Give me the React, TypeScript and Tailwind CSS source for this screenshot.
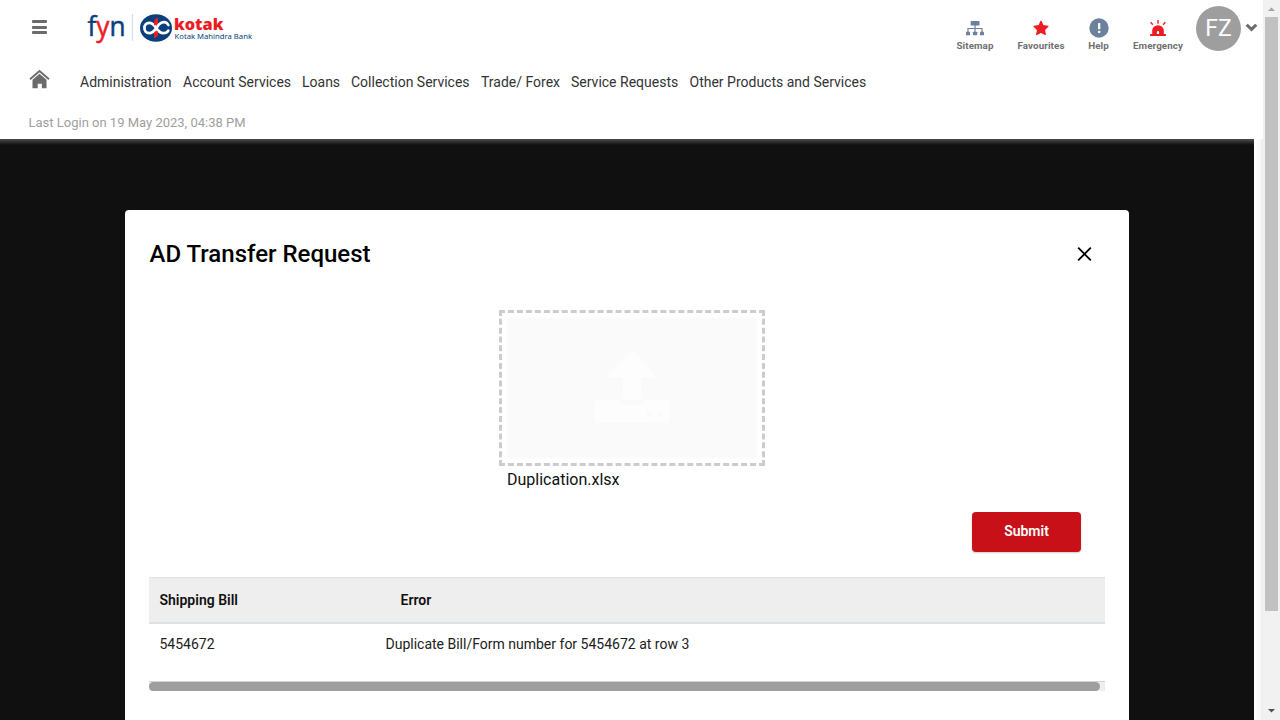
import React from "react";

const navItems = [
  { label: "Administration", width: "w-[103px]" },
  { label: "Account Services", width: "w-[119px]" },
  { label: "Loans", width: "w-[49px]" },
  { label: "Collection Services", width: "w-[130px]" },
  { label: "Trade/ Forex", width: "w-[90px]" },
  { label: "Service Requests", width: "w-[118.500px]" },
  { label: "Other Products and Services", width: "w-[200px]" },
];

function Logo() {
  return (
    <svg width="172" height="40" viewBox="84 8 172 40" className="block">
      <text x="87.5" y="35.6" fontFamily="Open Sans" fontSize="27.5" fontWeight="400" fill="#083f7c" stroke="#083f7c" strokeWidth=".5" textLength="38" lengthAdjust="spacingAndGlyphs">
        f<tspan fill="#ed1c24" stroke="#ed1c24">y</tspan>n
      </text>
      <path d="M132.500 14v27" stroke="#d5deeb" strokeWidth="1.200" />
      <ellipse cx="156" cy="28" rx="16" ry="13.800" fill="#083f7c" />
      <path d="M154.200 37.800V22.500c0-3 1.500-4.500 3.800-4.500v15.300c0 3-1.500 4.500-3.800 4.500Z" fill="#ed1c24" />
      <path d="M168.300 25c-1.800-3.600-6.300-3.800-9-.8-3 3.200-5 9-10 9-6.500 0-6.500-10.400 0-10.400 3.500 0 5 2.500 6.700 5 2 2.900 3.700 5.400 7.200 5.400 2.400 0 4.200-1 5.100-2.600" fill="none" stroke="#fff" strokeWidth="2.700" strokeLinecap="round" />
      <path d="M154.200 25.500V22.500c0-3 1.500-4.500 3.800-4.500v5.500M154.200 32.500v5.300c2.300 0 3.800-1.500 3.800-4.500v-2" fill="#ed1c24" />
      <text x="174" y="30" fontFamily="Open Sans" fontSize="16.500" fontWeight="800" fill="#ed1c24" textLength="49.500" lengthAdjust="spacingAndGlyphs">kotak</text>
      <text x="174.500" y="38.600" fontFamily="Noto Sans" fontSize="7.900" fill="#083f7c" textLength="77.500" lengthAdjust="spacingAndGlyphs">Kotak Mahindra Bank</text>
    </svg>
  );
}

function SitemapIcon() {
  return (
    <svg width="18" height="20" viewBox="0 0 18 20" fill="#6c819c">
      <rect x="4.700" y="3" width="8.800" height="4.500" rx=".5" />
      <rect x="0" y="13.800" width="4" height="3.400" rx=".4" />
      <rect x="6.900" y="13.800" width="4.300" height="3.400" rx=".4" />
      <rect x="14" y="13.800" width="4" height="3.400" rx=".4" />
      <path d="M9 7v7M2 14v-3.500h14V14" fill="none" stroke="#6c819c" strokeWidth="1.200" />
    </svg>
  );
}

function StarIcon() {
  return (
    <svg width="18" height="20" viewBox="0 0 18 20">
      <path d="m9 3.200 2.100 4.500 4.900.6-3.600 3.400.9 4.900L9 14.200l-4.300 2.400.9-4.900L2 8.300l4.900-.6Z" fill="#ed1c24" stroke="#ed1c24" strokeWidth="1.200" strokeLinejoin="round" />
    </svg>
  );
}

function HelpIcon() {
  return (
    <svg width="20" height="20" viewBox="0 0 20 20">
      <circle cx="10" cy="10" r="9.700" fill="#6c819c" />
      <rect x="9" y="5" width="2.300" height="6.300" rx=".6" fill="#fff" />
      <rect x="9" y="12.700" width="2.300" height="2.300" rx=".6" fill="#fff" />
    </svg>
  );
}

function SirenIcon() {
  return (
    <svg width="18" height="20" viewBox="0 0 18 20" fill="#ed1c24">
      <path d="M3.200 16.300V12.500a5.800 5.300 0 0 1 11.600 0v3.800h-4.700v-2.200a1.100 1.100 0 0 0-2.200 0v2.200Z" />
      <rect x="1" y="16" width="16" height="1.900" rx=".6" />
      <path d="M9 2v3.800M1.700 4.200l2.100 2.500M16.300 4.200l-2.100 2.500" stroke="#ed1c24" strokeWidth="1.400" />
    </svg>
  );
}

function Shortcut({ label, width, children }: { label: string; width: string; children: React.ReactNode }) {
  return (
    <div className={`flex shrink-0 flex-col items-center ${width}`}>
      {children}
      <span className="mt-[1px] whitespace-nowrap text-[9.800px] font-bold leading-[14px] tracking-[0.100px] text-[#707070]">{label}</span>
    </div>
  );
}

function Header() {
  return (
    <header className="h-[139px] w-full shrink-0 bg-white">
      <div className="flex h-[60px] items-start">
        <button className="ml-8 mt-5 flex w-[15px] flex-col gap-[2.500px]">
          <span className="h-[3px] w-full rounded-[1px] bg-[#6b6b6b]" />
          <span className="h-[3px] w-full rounded-[1px] bg-[#6b6b6b]" />
          <span className="h-[3px] w-full rounded-[1px] bg-[#6b6b6b]" />
        </button>
        <div className="ml-[37px] mt-2"><Logo /></div>
        <div className="ml-[700px] mt-[18px] flex gap-6">
          <Shortcut label="Sitemap" width="w-[38px]"><SitemapIcon /></Shortcut>
          <Shortcut label="Favourites" width="w-[46px]"><StarIcon /></Shortcut>
          <Shortcut label="Help" width="w-[21px]"><HelpIcon /></Shortcut>
          <Shortcut label="Emergency" width="w-[50px]"><SirenIcon /></Shortcut>
        </div>
        <div className="ml-[13px] mt-1.5 flex h-[45px] w-[45px] items-center justify-center rounded-full bg-[#9e9e9e] text-[23px] text-white">
          <span className="mt-px">FZ</span>
        </div>
        <svg className="ml-1 mt-[22px]" width="13" height="11" viewBox="0 0 13 11">
          <path d="m1.700 2.700 4.800 4.700 4.800-4.700" fill="none" stroke="#6b6b6b" strokeWidth="3" />
        </svg>
      </div>
      <div className="flex h-[44px] items-center">
        <svg className="-mt-[7px] ml-[29px]" width="21" height="20" viewBox="0 0 21 20" fill="#6b6b6b">
          <path d="M1 10.200 10.500 2l9.500 8.200" fill="none" stroke="#6b6b6b" strokeWidth="1.900" />
          <path d="m10.500 4.700 7 6v8.500h-4.600v-4.500H8.700v4.500H3.500v-8.500Z" />
        </svg>
        <nav className="ml-[30px] flex text-[14px] text-[#333]">
          {navItems.map((n) => (
            <a key={n.label} className={`whitespace-nowrap ${n.width}`}>{n.label}</a>
          ))}
        </nav>
      </div>
      <p className="ml-[28.500px] mt-[9px] text-[13px] leading-5 text-[#a0a0a0]">Last Login on 19 May 2023, 04:38 PM</p>
    </header>
  );
}

function UploadArea() {
  return (
    <div className="ml-[374px] mt-10 h-[156px] w-[266px] border-[3px] border-dashed border-[#ccc] p-[5px]">
      <div className="h-[140px] w-[250px] bg-[#fafafa]">
        <svg width="250" height="140" viewBox="507 318 250 140" fill="#fdfdfd">
          <path d="M631 351.500q1.300-1 2.600 0L654.500 373q1.500 3-1.500 4H641v20.500q0 2-2 2h-14q-2 0-2-2V377h-12.500q-3-1-1.500-4Z" />
          <path d="M598 400h19q2 0 3 2t4 3h17q3 0 4-3t3-2h18.500q3 0 3 3v17q0 3-3 3H598q-3 0-3-3v-17q0-3 3-3Z" />
          <circle cx="649" cy="414" r="2.700" fill="#fafafa" />
          <circle cx="660.500" cy="414" r="2.700" fill="#fafafa" />
        </svg>
      </div>
    </div>
  );
}

function Modal() {
  return (
    <section className="ml-[125px] mt-[71px] h-[510px] w-[1004px] rounded-t bg-white text-[#111]">
      <div className="flex items-center pt-7">
        <h1 className="ml-[24.500px] flex-1 text-[24px] font-medium leading-8 text-black">AD Transfer Request</h1>
        <svg className="mr-[36px]" width="17" height="17" viewBox="0 0 17 17">
          <path d="m2.200 1.700 12.600 12.600M14.800 1.700 2.200 14.300" stroke="#000" strokeWidth="1.800" />
        </svg>
      </div>
      <UploadArea />
      <p className="ml-[382px] mt-0.5 text-[16px] leading-6 text-[#111]">Duplication.xlsx</p>
      <div className="mt-5 flex justify-end pr-12">
        <button className="h-10 w-[109px] rounded bg-[#c71017] pb-0.5 text-[14px] font-semibold text-white shadow-[0_1px_2px_rgba(0,0,0,0.2)]">Submit</button>
      </div>
      <div className="ml-6 mt-[25px] w-[956px]">
        <div className="flex h-[47px] items-center border-b-2 border-t border-[#dee2e6] bg-[#eee] text-[14px] font-semibold text-[#111]">
          <span className="w-[251.500px] pl-[10.500px]">Shipping Bill</span>
          <span>Error</span>
        </div>
        <div className="flex h-[57px] items-start pt-2.5 text-[14px] leading-5 text-[#212121]">
          <span className="w-[236.500px] pl-[10.500px]">5454672</span>
          <span>Duplicate Bill/Form number for 5454672 at row 3</span>
        </div>
        <div className="h-[10px] w-full border-t border-[#d2d2d2] bg-[#eee]">
          <div className="h-[9px] w-[951px] rounded-full bg-[#9e9e9e]" />
        </div>
      </div>
    </section>
  );
}

function PageScrollbar() {
  return (
    <div className="flex h-full w-[17px] shrink-0 flex-col items-center bg-[#f1f1f1]">
      <svg className="shrink-0" width="17" height="17" viewBox="0 0 17 17"><path d="M5 11h7L8.500 7.500Z" fill="#a3a3a3" /></svg>
      <div className="h-[594px] w-[13px] bg-[#c1c1c1]" />
      <svg className="mt-auto shrink-0" width="17" height="17" viewBox="0 0 17 17"><path d="M5 6h7L8.500 9.500Z" fill="#505050" /></svg>
    </div>
  );
}

export default function App() {
  return (
    <div className="flex h-[720px] w-[1280px] overflow-hidden bg-white font-['Roboto',sans-serif]">
      <div className="flex h-full w-[1263px] flex-col">
        <Header />
        <div className="flex h-[581px]">
          <main className="w-[1254px] bg-[#101010] bg-[linear-gradient(#4c4c4c,#101010_6px)]">
            <div className="flex"><Modal /></div>
          </main>
          <div className="w-[9px] bg-[linear-gradient(to_right,#fff,#fafafa_60%,#ececec)]" />
        </div>
      </div>
      <PageScrollbar />
    </div>
  );
}
